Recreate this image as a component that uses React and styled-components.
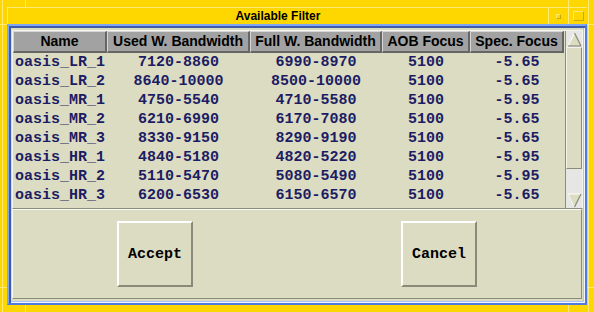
import React from 'react';
import styled, { createGlobalStyle } from 'styled-components';

const GlobalStyle = createGlobalStyle`
  html, body {
    margin: 0;
    padding: 0;
    background: #ffd700;
  }
  body {
    width: 594px;
    height: 312px;
    overflow: hidden;
  }
`;

const COLUMNS = [
  { title: 'Name', width: 94, align: 'left' },
  { title: 'Used W. Bandwidth', width: 143 },
  { title: 'Full W. Bandwidth', width: 132 },
  { title: 'AOB Focus', width: 88 },
  { title: 'Spec. Focus', width: 94 },
];

const FILTERS = [
  ['oasis_LR_1', '7120-8860', '6990-8970', '5100', '-5.65'],
  ['oasis_LR_2', '8640-10000', '8500-10000', '5100', '-5.65'],
  ['oasis_MR_1', '4750-5540', '4710-5580', '5100', '-5.95'],
  ['oasis_MR_2', '6210-6990', '6170-7080', '5100', '-5.65'],
  ['oasis_MR_3', '8330-9150', '8290-9190', '5100', '-5.65'],
  ['oasis_HR_1', '4840-5180', '4820-5220', '5100', '-5.95'],
  ['oasis_HR_2', '5110-5470', '5080-5490', '5100', '-5.95'],
  ['oasis_HR_3', '6200-6530', '6150-6570', '5100', '-5.65'],
];

const LIGHT_YELLOW = '#ffea78';

const Frame = styled.div`
  position: relative;
  box-sizing: border-box;
  width: 594px;
  height: 312px;
  padding: 7px;
  display: flex;
  flex-direction: column;
  background: #ffd700;
  box-shadow: inset 2px 0 0 #ffd700, inset 3px 0 0 ${LIGHT_YELLOW},
    inset -5px 0 0 #ffd700, inset -6px 0 0 ${LIGHT_YELLOW};
`;

const Notch = styled.span`
  position: absolute;
  background: ${LIGHT_YELLOW};
  ${(p) => (p.$vertical ? 'width: 1px; height: 7px;' : 'width: 7px; height: 1px;')}
`;

const TitleBar = styled.div`
  display: flex;
  height: 17px;
  border-top: 1px solid ${LIGHT_YELLOW};
  border-left: 1px solid ${LIGHT_YELLOW};
  box-sizing: border-box;
`;

const Title = styled.div`
  flex: 1;
  text-align: center;
  font-family: 'Liberation Sans', Arial, sans-serif;
  font-weight: bold;
  font-size: 12px;
  line-height: 16px;
  color: #000;
`;

const TitleButton = styled.div`
  width: ${(p) => p.$width}px;
  display: flex;
  align-items: center;
  justify-content: center;
  border-left: 1px solid ${LIGHT_YELLOW};
`;

const WinGlyph = styled.span`
  box-sizing: border-box;
  width: ${(p) => p.$w}px;
  height: ${(p) => p.$h}px;
  border: 1px solid;
  border-color: ${LIGHT_YELLOW} #c9a800 #c9a800 ${LIGHT_YELLOW};
`;

const Client = styled.div`
  flex: 1;
  display: flex;
  flex-direction: column;
  padding: 4px 2px 4px 3px;
  background: #dcdcc2;
  border: 2px solid;
  border-color: #7ea6f4 #4f7be0 #4f7be0 #7ea6f4;
  box-shadow: inset 2px 2px 0 #3d5ba6, inset -1px -1px 0 #f2f6ff,
    inset -2px -2px 0 #a9c4ff;
`;

const TableBox = styled.div`
  display: flex;
  border: 1px solid;
  border-color: #f4f4ee #f4f4ee #8c8c7c #f4f4ee;
`;

const ListArea = styled.div`
  width: 552px;
  padding-bottom: 3px;
`;

const HeaderRow = styled.div`
  display: flex;
  height: 22px;
`;

const HeaderCell = styled.div`
  box-sizing: border-box;
  width: ${(p) => p.$width}px;
  background: #a2a2a2;
  border-style: solid;
  border-width: 1px 2px 2px 1px;
  border-color: #d6d6d6 #666 #666 #d6d6d6;
  text-align: center;
  font-family: 'Liberation Sans', Arial, sans-serif;
  font-weight: bold;
  font-size: 14px;
  line-height: 19px;
  color: #000;
  white-space: nowrap;
  overflow: hidden;
`;

const Row = styled.div`
  display: flex;
  height: 19px;
`;

const Cell = styled.div`
  box-sizing: border-box;
  width: ${(p) => p.$width}px;
  padding-left: ${(p) => (p.$align === 'left' ? 2 : 0)}px;
  text-align: ${(p) => p.$align || 'center'};
  font-family: 'Liberation Mono', 'Courier New', monospace;
  font-weight: bold;
  font-size: 15px;
  line-height: 19px;
  color: #1c1c64;
  white-space: pre;
`;

const ScrollBar = styled.div`
  width: 17px;
  box-sizing: border-box;
  margin-left: 1px;
  display: flex;
  flex-direction: column;
  border-left: 1px solid #8c8c7c;
  background: #e6e6e4;
`;

const ArrowCell = styled.div`
  height: 16px;
  display: flex;
  align-items: center;
  justify-content: center;
`;

const Thumb = styled.div`
  height: ${(p) => p.$size}px;
  box-sizing: border-box;
  background: #dcdcc2;
  border: 1px solid;
  border-color: #f4f4ee #8c8c7c #8c8c7c #f4f4ee;
`;

const Trough = styled.div`
  flex: 1;
`;

const ButtonPanel = styled.div`
  box-sizing: border-box;
  height: 90px;
  margin-right: 1px;
  display: flex;
  align-items: center;
  justify-content: space-around;
  border: 1px solid;
  border-color: #fafaf4 #8c8c7c #8c8c7c #fafaf4;
`;

const PushButton = styled.button`
  box-sizing: border-box;
  width: 76px;
  height: 66px;
  padding: 0;
  background: #dcdcc2;
  border: 2px solid;
  border-color: #ffffff #8a8a78 #8a8a78 #ffffff;
  font-family: 'Liberation Mono', 'Courier New', monospace;
  font-weight: bold;
  font-size: 15px;
  color: #000;
  cursor: pointer;
`;

function UpArrow() {
  return (
    <svg width="15" height="15" viewBox="0 0 15 15">
      <polygon points="7.5,1 14,14 1,14" fill="#dcdcc2" />
      <line x1="7.5" y1="1" x2="1" y2="14" stroke="#fafaf4" strokeWidth="1.2" />
      <line x1="7.5" y1="1" x2="14" y2="14" stroke="#8c8c7c" strokeWidth="1.2" />
      <line x1="1" y1="14" x2="14" y2="14" stroke="#8c8c7c" strokeWidth="1.2" />
    </svg>
  );
}

function DownArrow() {
  return (
    <svg width="15" height="15" viewBox="0 0 15 15">
      <polygon points="1,1 14,1 7.5,14" fill="#dcdcc2" />
      <line x1="1" y1="1" x2="14" y2="1" stroke="#fafaf4" strokeWidth="1.2" />
      <line x1="1" y1="1" x2="7.5" y2="14" stroke="#fafaf4" strokeWidth="1.2" strokeDasharray="1.5 1" />
      <line x1="14" y1="1" x2="7.5" y2="14" stroke="#8c8c7c" strokeWidth="1.2" />
    </svg>
  );
}

export default function App() {
  return (
    <>
      <GlobalStyle />
      <Frame>
        <Notch $vertical style={{ left: 25, top: 0 }} />
        <Notch $vertical style={{ left: 568, top: 0 }} />
        <Notch $vertical style={{ left: 25, bottom: 0 }} />
        <Notch $vertical style={{ left: 568, bottom: 0 }} />
        <Notch style={{ left: 0, top: 24 }} />
        <Notch style={{ right: 0, top: 24 }} />
        <Notch style={{ left: 0, bottom: 24 }} />
        <Notch style={{ right: 0, bottom: 24 }} />

        <TitleBar>
          <Title>Available Filter</Title>
          <TitleButton $width={19}>
            <WinGlyph $w={5} $h={5} />
          </TitleButton>
          <TitleButton $width={18}>
            <WinGlyph $w={11} $h={10} />
          </TitleButton>
        </TitleBar>

        <Client>
          <TableBox>
            <ListArea>
              <HeaderRow>
                {COLUMNS.map((c) => (
                  <HeaderCell key={c.title} $width={c.width}>
                    {c.title}
                  </HeaderCell>
                ))}
              </HeaderRow>
              {FILTERS.map((row) => (
                <Row key={row[0]}>
                  {row.map((value, i) => (
                    <Cell key={i} $width={COLUMNS[i].width} $align={COLUMNS[i].align}>
                      {value}
                    </Cell>
                  ))}
                </Row>
              ))}
            </ListArea>
            <ScrollBar>
              <ArrowCell>
                <UpArrow />
              </ArrowCell>
              <Thumb $size={122} />
              <Trough />
              <ArrowCell>
                <DownArrow />
              </ArrowCell>
            </ScrollBar>
          </TableBox>

          <ButtonPanel>
            <PushButton>Accept</PushButton>
            <PushButton>Cancel</PushButton>
          </ButtonPanel>
        </Client>
      </Frame>
    </>
  );
}
